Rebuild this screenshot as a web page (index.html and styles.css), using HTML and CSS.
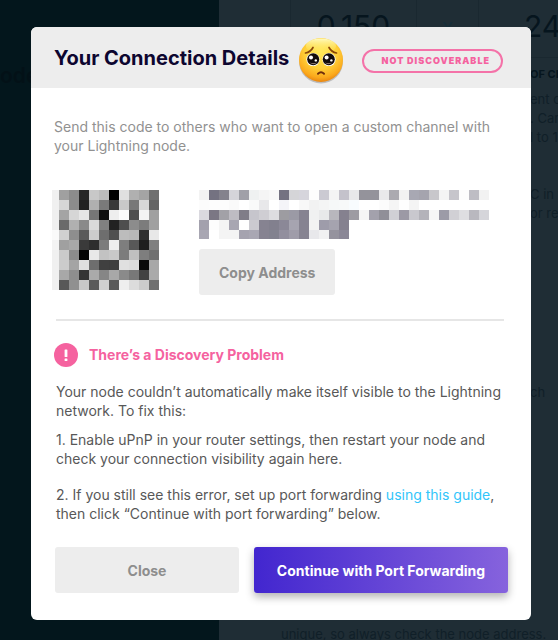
FILE: index.html
```html
<!DOCTYPE html>
<html lang="en">
<head>
    <meta charset="UTF-8">
    <meta name="viewport" content="width=device-width, initial-scale=1.0">
    <title>Your Connection Details</title>
    <link rel="stylesheet" href="styles.css">
</head>
<body>
    <div class="page" aria-hidden="true">
        <div class="sidebar">ode</div>
        <div class="main">
            <div class="totals">
                <div class="total"></div>
                <div class="total">0.150</div>
                <div class="total times">x</div>
                <div class="total last">24</div>
            </div>
            <div class="notes">
                <h4>OF CH</h4>
                <p>ent o<br>. Car<br>l to 1</p>
                <p class="later">C in y<br>or rer</p>
                <p class="each">ch</p>
            </div>
            <p class="footnote">unique, so always check the node address.</p>
        </div>
    </div>

    <div class="overlay">
        <div class="modal" role="dialog" aria-labelledby="modalTitle">
            <div class="modal-header">
                <h1 id="modalTitle">Your Connection Details</h1>
                <svg class="emoji" viewBox="0 0 48 50" aria-hidden="true">
                    <defs>
                        <radialGradient id="face" cx="50%" cy="32%" r="68%">
                            <stop offset="0" stop-color="#ffe95a"/>
                            <stop offset="0.55" stop-color="#ffcf38"/>
                            <stop offset="0.85" stop-color="#fba91c"/>
                            <stop offset="1" stop-color="#e98510"/>
                        </radialGradient>
                        <linearGradient id="shine" x1="0" y1="0" x2="0" y2="1">
                            <stop offset="0" stop-color="#fffbc0"/>
                            <stop offset="1" stop-color="#ffe95a" stop-opacity="0"/>
                        </linearGradient>
                    </defs>
                    <ellipse cx="24" cy="25.5" rx="22" ry="22" fill="#000" opacity="0.2"/>
                    <circle cx="24" cy="24" r="22" fill="url(#face)"/>
                    <ellipse cx="24" cy="10" rx="15" ry="7.5" fill="url(#shine)"/>
                    <path d="M8.5 17q5-1 7.5-5.5M39.5 17q-5-1-7.5-5.5" fill="none" stroke="#8a4708" stroke-width="1.7" stroke-linecap="round"/>
                    <circle cx="16" cy="23.5" r="6.6" fill="#fff"/>
                    <circle cx="32" cy="23.5" r="6.6" fill="#fff"/>
                    <circle cx="16.2" cy="23.3" r="6" fill="#120b0b"/>
                    <circle cx="31.8" cy="23.3" r="6" fill="#120b0b"/>
                    <path d="M12.5 26.4q4 3.6 8 0q-4 1.2-8 0zM27.5 26.4q4 3.6 8 0q-4 1.2-8 0z" fill="#85726a"/>
                    <circle cx="14" cy="21.6" r="2" fill="#fff"/>
                    <circle cx="29.6" cy="21.6" r="2" fill="#fff"/>
                    <circle cx="18.8" cy="24.4" r="1.2" fill="#fff"/>
                    <circle cx="34.4" cy="24.4" r="1.2" fill="#fff"/>
                    <path d="M21 37.7q3-2.8 6 0" fill="none" stroke="#6d2c0c" stroke-width="2" stroke-linecap="round"/>
                </svg>
                <span class="badge">NOT DISCOVERABLE</span>
            </div>

            <div class="modal-body">
                <p class="intro">Send this code to others who want to open a custom channel with your Lightning node.</p>

                <div class="code">
                    <svg class="qr" id="qr" viewBox="0 0 107 100" role="img" aria-label="QR code"></svg>
                    <div class="address">
                        <svg class="hash" id="hash" viewBox="0 0 290 49" role="img" aria-label="Node address"></svg>
                        <button type="button" class="copy">Copy Address</button>
                    </div>
                </div>

                <hr>

                <h2>
                    <svg class="alert" viewBox="0 0 24 24" aria-hidden="true">
                        <circle cx="12" cy="12" r="12" fill="#f5629f"/>
                        <rect x="10.6" y="6.5" width="2.8" height="7.5" rx="0.6" fill="#fff"/>
                        <rect x="10.6" y="15.4" width="2.8" height="2.6" rx="0.6" fill="#fff"/>
                    </svg>
                    There’s a Discovery Problem
                </h2>
                <div class="help">
                    <p>Your node couldn’t automatically make itself visible to the Lightning network. To fix this:</p>
                    <p>1. Enable uPnP in your router settings, then restart your node and check your connection visibility again here.</p>
                    <p class="step">2. If you still see this error, set up port forwarding <a href="#guide">using this guide</a>, then click “Continue with port forwarding” below.</p>
                </div>

                <div class="actions">
                    <button type="button" class="close">Close</button>
                    <button type="button" class="continue">Continue with Port Forwarding</button>
                </div>
            </div>
        </div>
    </div>

    <script src="script.js"></script>
</body>
</html>
```
FILE: styles.css
```css
* {
    box-sizing: border-box;
}
body {
    margin: 0;
    font-family: Inter, "Liberation Sans", sans-serif;
    font-size: 14px;
    line-height: 19px;
    color: #585858;
    background-color: #1f2d35;
}
h1, h2, h4, p {
    margin: 0;
}
button {
    height: 46px;
    padding: 0 20px;
    border: none;
    border-radius: 3px;
    font-family: inherit;
    font-size: 14px;
    font-weight: 700;
    color: #8e8e8e;
    background-color: #ededed;
    cursor: pointer;
}

/* dimmed page behind the dialog */
.page {
    display: flex;
    height: 100vh;
    overflow: hidden;
    white-space: nowrap;
    color: #101f28;
}
.sidebar {
    flex: 0 0 219px;
    padding-top: 64px;
    font-size: 21px;
    font-weight: 600;
    line-height: 24px;
    color: #031117;
    background-color: #03161c;
}
.main {
    flex: 1;
    display: flex;
    flex-direction: column;
    min-width: 0;
}
.totals {
    display: grid;
    grid-template-columns: 72px 126px 62px 1fr;
    height: 58px;
    border-bottom: 1px solid #1a2830;
}
.total {
    padding-top: 8px;
    border-right: 1px solid #1a2830;
    font-size: 30px;
    line-height: 36px;
    text-align: center;
    color: #06151e;
}
.times {
    font-size: 22px;
    color: #162d39;
}
.last {
    padding-left: 45px;
    border-right: none;
    text-align: left;
}
.notes {
    flex: 1;
    padding: 7px 0 0 311px;
}
.notes h4 {
    margin-bottom: 6px;
    font-size: 11px;
    color: #06151e;
}
.notes p, .footnote {
    font-size: 13px;
}
.notes .later {
    margin-top: 38px;
}
.notes .each {
    margin-top: 160px;
}
.footnote {
    padding-left: 62px;
    margin-bottom: -4px;
}

.overlay {
    position: fixed;
    inset: 0;
    padding: 27px 27px 20px 31px;
    overflow: auto;
}
.modal {
    max-width: 500px;
    margin: 0 auto;
    border-radius: 6px;
    overflow: hidden;
    background-color: #fff;
}
.modal-header {
    display: flex;
    align-items: center;
    height: 61px;
    padding: 0 28px 0 23px;
    background-color: #ededed;
}
.modal-header h1 {
    font-size: 20px;
    line-height: 24px;
    color: #0d0630;
    white-space: nowrap;
}
.emoji {
    flex: none;
    width: 48px;
    height: 50px;
    margin: 7px 0 0 8px;
}
.badge {
    margin: 6px 0 0 auto;
    padding: 0 11px 0 18px;
    border: 2px solid #f472a8;
    border-radius: 12px;
    font-size: 9px;
    font-weight: 900;
    line-height: 20px;
    letter-spacing: 1px;
    color: #f5629f;
    white-space: nowrap;
}
.modal-body {
    padding: 29px 23px 27px;
}
.intro {
    color: #919191;
}
.code {
    display: flex;
    gap: 40px;
    margin-top: 35px;
}
.qr {
    flex: none;
    width: 107px;
    height: 100px;
    margin-left: -2px;
}
.hash {
    display: block;
    width: 290px;
    height: 49px;
    margin-bottom: 10px;
}
hr {
    height: 2px;
    margin: 24px 4px 0 2px;
    border: none;
    background-color: #e6e6e6;
}
h2 {
    display: flex;
    align-items: center;
    gap: 11px;
    margin-top: 22px;
    font-size: 14px;
    font-weight: 700;
    line-height: 24px;
    color: #f5629f;
}
.alert {
    width: 24px;
    height: 24px;
}
.help {
    padding-left: 2px;
    margin-top: 15px;
}
.help p + p {
    margin-top: 10px;
}
.help p + .step {
    margin-top: 17px;
}
.help a {
    color: #32c5fa;
    text-decoration: none;
}
.actions {
    display: flex;
    gap: 15px;
    margin-top: 24px;
    padding-left: 1px;
}
.actions button {
    padding: 0;
    white-space: nowrap;
}
.close {
    flex: 184;
}
.continue {
    flex: 254;
    color: #fff;
    background: linear-gradient(90deg, #4226cf, #8663dd);
    box-shadow: 0 4px 8px rgba(0, 0, 0, 0.3);
}
```
FILE: script.js
```js
// one hex pair per cell, first column is narrower
const qrRows = [
    'f0 a0 8c 28 c8 bc 00 e0 b0 a4 70',
    'f0 d6 8c 22 b0 7a 38 c8 78 d8 64',
    'ef a4 d6 e6 76 10 ee fc 4e f4 a0',
    'f0 6a b0 8a da 80 22 4e 8c 7c a0',
    'fa d0 8e 5a cc 6e 50 bc b8 30 e8',
    'f3 a0 a8 3a 2e 7c ee 7e 58 1e 80',
    'f0 ca 8c 04 e8 c2 c8 7c c0 7e 70',
    'f0 cc a4 e0 6e 40 3e e0 dc 0a a8',
    'f0 a8 8e 34 aa 86 a8 8a 78 42 aa',
    'f0 58 90 c8 5a d0 5a ee dc cc 70'
];

const hashRows = [
    'f3f3f3 747281 84828d d5d4da a0a0a8 eff1f1 f5f5f5 f8f8f8 747281 d5d5d8 d6d5dc fdfdfd cbcad2 f4f4f4 c4c2cb e8e8ea 94939b 94939b e9e9eb abaab0 f2f2f2 a8a8b3 a5a4ae c8c7cb f4f4f4 c6c5cb fdfdfd bebdc4 f2f2f2',
    'fcfcfc fdfdfd fdfdfd fafafa ffffff f9fafa e8e8ea ffffff f4f4f8 ffffff f8f8f8 f2f2f2 f4f5f5 f6f8f8 f7f9f9 f8fcfe ffffff ffffff fcfcfc f5f5f5 fefefe f4f4f4',
    'dad9df 7b7784 a2a1a7 bebcc3 807d88 c6c5cc cfced3 dddde0 9d9ca1 9b9aa5 868391 f0f1f1 e8e9ea b8b7bd 85818f 9d9ba2 f5f5f5 a3a1ac 908f98 d0d0d5 9c99a5 c9c8ce b4b3ba f6f6f6 9c9ba7 d1d0d5 dedee1 b9b8bf d5d5da',
    'a3a1ad fdfdfd f4f4f4 a8a6b2 ffffff cbcad0 868391 82808e 8b8897 a6a4b0 868391 f3f3f3 9e9caa a5a3af 85818f',
    'a8a6b2 ffffff f4f4f4 f4f4f4 a5a3af a9a7b3 868391 82828f 928f9e 9f9ca9 868391 e8e8eb f1f1f2 95939e 8b8897'
];

function drawCells(id, rows, firstWidth) {
    let cells = '';
    rows.forEach((row, y) => {
        row.split(' ').forEach((color, x) => {
            const fill = color.length === 2 ? color.repeat(3) : color;
            const left = x === 0 ? 0 : firstWidth + (x - 1) * 10;
            const width = x === 0 ? firstWidth : 10;
            cells += `<rect x="${left}" y="${y * 10}" width="${width}" height="10" fill="#${fill}"/>`;
        });
    });
    document.getElementById(id).innerHTML = cells;
}

drawCells('qr', qrRows, 7);
drawCells('hash', hashRows, 10);
```
